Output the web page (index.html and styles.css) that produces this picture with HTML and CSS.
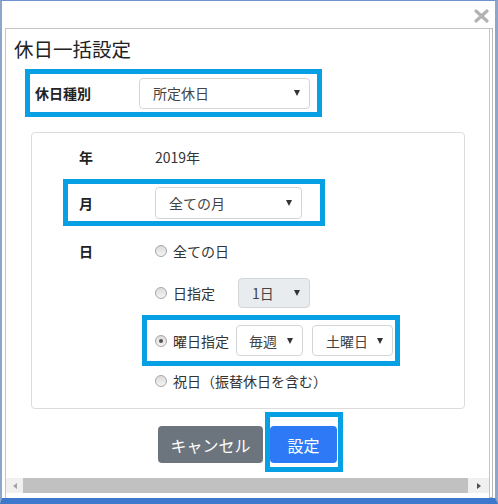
FILE: index.html
```html
<!DOCTYPE html>
<html lang="ja">
<head>
  <meta charset="UTF-8" />
  <meta name="viewport" content="width=device-width, initial-scale=1.0"/>
  <title>休日一括設定</title>
  <link rel="stylesheet" href="styles.css">
</head>
<body>
  <div class="window">
    <div class="titlebar">
      <svg class="close" width="15" height="14" viewBox="0 0 15 14">
        <path d="M2 2 L13 12 M13 2 L2 12" stroke="#b3b3b3" stroke-width="3.2" stroke-linecap="round"/>
      </svg>
    </div>

    <div class="panel">
      <h1 class="title">休日一括設定</h1>

      <div class="mark mark-type">
        <span class="label label-type">休日種別</span>
        <div class="select select-type"><span>所定休日</span><span class="arrow"></span></div>
      </div>

      <div class="card">
        <div class="row">
          <span class="label">年</span>
          <span class="value">2019年</span>
        </div>

        <div class="row mark mark-month">
          <span class="label">月</span>
          <div class="select select-month"><span>全ての月</span><span class="arrow"></span></div>
        </div>

        <div class="row row-gap">
          <span class="label">日</span>
          <span class="radio"></span>
          <span class="value">全ての日</span>
        </div>

        <div class="row row-gap">
          <span class="label"></span>
          <span class="radio"></span>
          <span class="value">日指定</span>
          <div class="select select-date disabled"><span>1日</span><span class="arrow"></span></div>
        </div>

        <div class="mark mark-week">
          <span class="radio checked"></span>
          <span class="value">曜日指定</span>
          <div class="select select-freq"><span>毎週</span><span class="arrow"></span></div>
          <div class="select select-wday"><span>土曜日</span><span class="arrow"></span></div>
        </div>

        <div class="row row-holiday">
          <span class="label"></span>
          <span class="radio"></span>
          <span class="value">祝日（振替休日を含む）</span>
        </div>
      </div>

      <div class="actions">
        <button class="btn btn-cancel">キャンセル</button>
        <div class="mark mark-btn">
          <button class="btn btn-primary">設定</button>
        </div>
      </div>

      <div class="scrollbar">
        <span class="scroll-btn"><span class="tri-left"></span></span>
        <span class="thumb"></span>
        <span class="scroll-btn"><span class="tri-right"></span></span>
      </div>
    </div>
  </div>
</body>
</html>
```

FILE: styles.css
```css
body {
  margin: 0;
  font-family: "Noto Sans CJK JP", "Noto Sans", sans-serif;
  color: #222;
  background: #fff;
}
.window {
  width: 498px;
  height: 504px;
  box-sizing: border-box;
  border-top: 1px solid #6f93cc;
  border-left: 2px solid #8ea6cc;
  border-right: 3px solid #8ea6cc;
  border-bottom: 6px solid #3e78cc;
  padding: 0 5px 0 3px;
  display: flex;
  flex-direction: column;
  background: #fff;
}
.titlebar {
  height: 27px;
  display: flex;
  justify-content: flex-end;
  align-items: flex-start;
}
.close {
  margin: 8px 1px 0 0;
}
.panel {
  flex: 1;
  border: 1px solid #c4c4c4;
  border-bottom: none;
  box-shadow: 3px 0 0 -1px #fff, 3px 0 0 0 #b9b9b9;
  display: flex;
  flex-direction: column;
  padding-top: 7px;
}
.title {
  margin: 0 0 0 8px;
  font-size: 19.5px;
  font-weight: normal;
  line-height: 26px;
  color: #222;
}
.mark {
  border: 5px solid #08a0e4;
  box-sizing: border-box;
}
.label {
  font-size: 14px;
  font-weight: bold;
  width: 76px;
  flex: none;
}
.value {
  font-size: 14px;
  color: #333;
}
.mark-type {
  margin: 7px 0 0 19px;
  width: 297px;
  height: 48px;
  padding-left: 5px;
  display: flex;
  align-items: center;
}
.label-type {
  width: 104px;
}
.select {
  box-sizing: border-box;
  border: 1px solid #d3d6d9;
  border-radius: 4px;
  background: #fff;
  display: flex;
  align-items: center;
  justify-content: space-between;
  padding: 0 9px 0 13px;
  font-size: 14px;
  color: #444;
  flex: none;
}
.select.disabled {
  background: #e9ecef;
}
.arrow {
  width: 0;
  height: 0;
  border-left: 3.5px solid transparent;
  border-right: 3.5px solid transparent;
  border-top: 6px solid #333;
}
.select-type {
  width: 171px;
  height: 31px;
}
.card {
  margin: 15px 0 0 25px;
  width: 434px;
  box-sizing: border-box;
  border: 1px solid #dcdcdc;
  border-radius: 4px;
  padding: 7px 0 16px 31px;
}
.row {
  height: 34px;
  display: flex;
  align-items: center;
  padding-left: 16px;
  box-sizing: border-box;
}
.mark-month {
  margin-top: 5px;
  width: 262px;
  height: 47px;
  padding-left: 11px;
}
.select-month {
  width: 147px;
  height: 32px;
}
.row-gap {
  margin-top: 8px;
}
.radio {
  width: 12px;
  height: 12px;
  box-sizing: border-box;
  border-radius: 50%;
  border: 1px solid #a6a6a6;
  background: linear-gradient(#dcdcdc, #f4f4f4);
  margin-right: 6px;
  flex: none;
  display: flex;
  align-items: center;
  justify-content: center;
}
.radio.checked::after {
  content: "";
  width: 4px;
  height: 4px;
  border-radius: 50%;
  background: #555;
}
.select-date {
  width: 72px;
  height: 30px;
  margin-left: 23px;
}
.mark-week {
  margin: 5px 0 0 79px;
  width: 258px;
  height: 51px;
  padding-left: 8px;
  display: flex;
  align-items: center;
}
.select-freq {
  width: 67px;
  height: 31px;
  margin-left: 7px;
  padding-left: 12px;
}
.select-wday {
  width: 81px;
  height: 31px;
  margin-left: 9px;
}
.row-holiday {
  margin-top: 4px;
  height: 22px;
}
.actions {
  margin-top: 3px;
  padding-left: 152px;
  display: flex;
  align-items: flex-start;
}
.btn {
  font-family: inherit;
  font-size: 16px;
  color: #fff;
  border: none;
  border-radius: 4px;
  height: 37px;
  padding: 0;
  cursor: pointer;
}
.btn-cancel {
  width: 105px;
  margin-top: 14px;
  background: #6c757d;
}
.mark-btn {
  margin-left: 2px;
  width: 78px;
  height: 60px;
  padding-top: 9px;
}
.btn-primary {
  width: 67px;
  background: #2e7af6;
}
.scrollbar {
  margin-top: 6px;
  height: 15px;
  background: #f0f0f0;
  display: flex;
  align-items: stretch;
}
.scroll-btn {
  width: 17px;
  display: flex;
  align-items: center;
  justify-content: center;
  flex: none;
}
.scroll-btn:last-child {
  width: 21px;
}
.thumb {
  flex: 1;
  background: #c1c1c1;
}
.tri-left {
  width: 0;
  height: 0;
  border-top: 3.5px solid transparent;
  border-bottom: 3.5px solid transparent;
  border-right: 4px solid #a3a3a3;
}
.tri-right {
  width: 0;
  height: 0;
  border-top: 3.5px solid transparent;
  border-bottom: 3.5px solid transparent;
  border-left: 4px solid #505050;
}
```
